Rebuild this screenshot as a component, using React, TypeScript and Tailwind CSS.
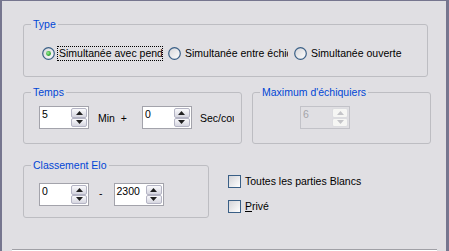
import React from 'react';
import clsx from 'clsx';

function Radio({ checked }: { checked?: boolean }) {
  return (
    <svg width="13" height="13" viewBox="0 0 13 13" className="shrink-0">
      <defs>
        <linearGradient id="radioFill" x1="0" y1="0" x2="1" y2="1">
          <stop offset="0" stopColor="#d4d4d8" />
          <stop offset="1" stopColor="#ffffff" />
        </linearGradient>
        <radialGradient id="radioDot" cx="0.4" cy="0.4" r="0.6">
          <stop offset="0" stopColor="#9cf09c" />
          <stop offset="1" stopColor="#1f9a1f" />
        </radialGradient>
      </defs>
      <circle cx="6.5" cy="6.5" r="5.8" fill="url(#radioFill)" stroke="#3a5f86" strokeWidth="1.2" />
      {checked && <circle cx="6.5" cy="6.5" r="2.4" fill="url(#radioDot)" />}
    </svg>
  );
}

function Checkbox({ label, accel }: { label: string; accel?: boolean }) {
  return (
    <div className="flex h-[13px] items-center">
      <div className="h-[13px] w-[13px] shrink-0 border border-[#3a5f86] bg-linear-to-br from-[#d4d4d8] to-white" />
      <span className="ml-[4px] leading-[13px] whitespace-nowrap">
        {accel ? (
          <>
            <span className="underline">{label[0]}</span>
            {label.slice(1)}
          </>
        ) : (
          label
        )}
      </span>
    </div>
  );
}

function Arrow({ up, disabled }: { up?: boolean; disabled?: boolean }) {
  return (
    <svg width="7" height="4" viewBox="0 0 7 4">
      <polygon
        points={up ? '3.5,0 7,4 0,4' : '0,0 7,0 3.5,4'}
        fill={disabled ? '#c4c4c8' : '#202020'}
      />
    </svg>
  );
}

function SpinButton({ up, disabled }: { up?: boolean; disabled?: boolean }) {
  return (
    <div
      className={clsx(
        'flex flex-1 items-center justify-center rounded-[2px] border',
        disabled
          ? 'border-[#dcdce0] bg-[#f6f6f4]'
          : 'border-[#b4b4c4] bg-linear-to-b from-[#fafafc] to-[#d6d6e0]'
      )}
    >
      <Arrow up={up} disabled={disabled} />
    </div>
  );
}

function Spin({ value, disabled }: { value: string; disabled?: boolean }) {
  return (
    <div
      className={clsx(
        'flex h-[23px] w-[50px] shrink-0 border',
        disabled ? 'border-[#c2c2c8] bg-[#e0dfe3]' : 'border-[#a3a3ab] bg-white'
      )}
    >
      <div
        className={clsx(
          'flex-1 pl-[2px] pt-[1px] leading-[13px]',
          disabled ? 'text-[#a5a4a9]' : 'text-black'
        )}
      >
        {value}
      </div>
      <div className="flex w-[17px] flex-col py-[1px] pr-[1px]">
        <SpinButton up disabled={disabled} />
        <SpinButton disabled={disabled} />
      </div>
    </div>
  );
}

function Group({
  title,
  className,
  children,
}: {
  title: string;
  className?: string;
  children: React.ReactNode;
}) {
  return (
    <fieldset className={clsx('rounded-[3px] border border-[#bdbdc2] px-[7px]', className)}>
      <legend className="px-[2px] leading-[13px] text-[#0046d5]">{title}</legend>
      {children}
    </fieldset>
  );
}

const radios = [
  { label: 'Simultanée avec pendule', checked: true },
  { label: 'Simultanée entre échiquiers' },
  { label: 'Simultanée ouverte' },
];

export default function App() {
  return (
    <div className="h-[251px] w-[449px] overflow-hidden border-t border-r-[3px] border-l-2 border-[#76768f] bg-[#e0dfe3] font-['Liberation_Sans',Arial,sans-serif] text-[10.5px] text-black">
      <Group title="Type" className="ml-[21px] mt-[17px] w-[404px] pb-[14px] pt-[14px]">
        <div className="ml-[11px] grid grid-cols-[126px_126px_126px]">
          {radios.map((r) => (
            <div key={r.label} className="flex h-[17px] items-center">
              <Radio checked={r.checked} />
              <span
                className={clsx(
                  'ml-[2px] w-[106px] overflow-hidden whitespace-nowrap border px-[1px] leading-[13px]',
                  r.checked ? 'border-dotted border-black' : 'border-transparent'
                )}
              >
                {r.label}
              </span>
            </div>
          ))}
        </div>
      </Group>

      <div className="ml-[21px] mt-[9px] flex gap-[10px]">
        <Group title="Temps" className="w-[215px] pb-[14px] pt-[7px]">
          <div className="ml-[8px] flex w-[195px] items-start overflow-hidden whitespace-nowrap">
            <Spin value="5" />
            <span className="ml-[9px] pt-[6px] leading-[13px]">Min&nbsp;&nbsp;+</span>
            <div className="ml-[15px]">
              <Spin value="0" />
            </div>
            <span className="ml-[8px] pt-[6px] leading-[13px]">Sec/coup</span>
          </div>
        </Group>
        <Group title="Maximum d'échiquiers" className="w-[179px] pb-[14px] pt-[7px]">
          <div className="ml-[40px]">
            <Spin value="6" disabled />
          </div>
        </Group>
      </div>

      <div className="ml-[21px] mt-[15px] flex items-start">
        <Group title="Classement Elo" className="w-[186px] pb-[11px] pt-[11px]">
          <div className="ml-[8px] flex items-start">
            <Spin value="0" />
            <span className="ml-[10px] pt-[4px] leading-[13px]">-</span>
            <div className="ml-[11px]">
              <Spin value="2300" />
            </div>
          </div>
        </Group>
        <div className="ml-[19px] flex flex-col gap-[12px] pt-[16px]">
          <Checkbox label="Toutes les parties Blancs" />
          <Checkbox label="Privé" accel />
        </div>
      </div>

      <div className="ml-[10px] mt-[31px] w-[425px] border-t border-b border-t-[#a0a0a6] border-b-white" />
    </div>
  );
}
